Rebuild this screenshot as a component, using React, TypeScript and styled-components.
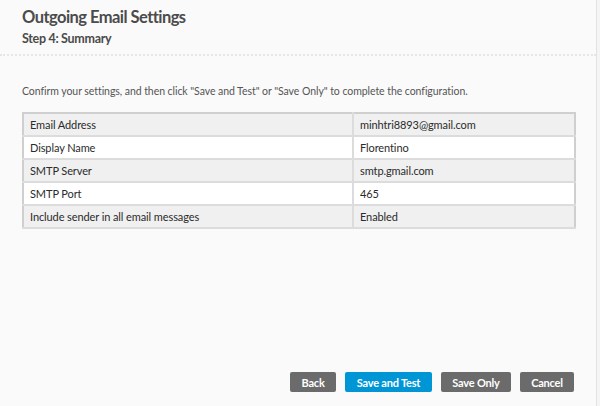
import React from "react";
import styled, { createGlobalStyle } from "styled-components";

const GlobalStyle = createGlobalStyle`
  html, body { margin: 0; padding: 0; background: #fafafa; }
  body { font-family: Lato, "Open Sans", sans-serif; }
  * { box-sizing: border-box; }
`;

const Frame = styled.div`
  width: 600px;
  height: 406px;
  display: flex;
  background: #fafafa;
  overflow: hidden;
`;

const Main = styled.div`
  flex: 1;
  display: flex;
  flex-direction: column;
  border-right: 1px solid #e2e2e2;
`;

const Edge = styled.div`
  width: 3px;
  background: #f4f4f4;
`;

const Header = styled.div`
  padding: 7px 0 0 22px;
  height: 56px;
  border-bottom: 2px dotted #e6e6e6;
`;

const Title = styled.h1`
  margin: 0;
  font-size: 16.5px;
  letter-spacing: -0.55px;
  line-height: 20px;
  font-weight: 700;
  color: #4b4b4b;
`;

const Subtitle = styled.h2`
  margin: 4px 0 0;
  font-size: 12.5px;
  letter-spacing: -0.3px;
  line-height: 16px;
  font-weight: 700;
  color: #4b4b4b;
`;

const Body = styled.div`
  flex: 1;
  padding: 28px 0 0 22px;
  display: flex;
  flex-direction: column;
`;

const Intro = styled.p`
  margin: 0;
  font-size: 10.5px;
  letter-spacing: -0.06px;
  line-height: 14px;
  color: #555;
`;

const Table = styled.table`
  margin-top: 14px;
  width: 554px;
  border-collapse: collapse;
  border: 2px solid #cfcfcf;
`;

const Row = styled.tr<{ $shaded: boolean }>`
  background: ${(p) => (p.$shaded ? "#f0f0f0" : "#ffffff")};
  border-bottom: 2px solid #dcdcdc;
`;

const Cell = styled.td<{ $w?: number }>`
  height: 23px;
  padding: 0 6px;
  font-size: 11px;
  letter-spacing: -0.1px;
  color: #2b2b2b;
  width: ${(p) => (p.$w ? `${p.$w}px` : "auto")};
  & + & { border-left: 2px solid #dcdcdc; }
`;

const Footer = styled.div`
  display: flex;
  justify-content: flex-end;
  gap: 9px;
  padding: 0 22px 14px 0;
`;

const Button = styled.button<{ $primary?: boolean; $w: number }>`
  width: ${(p) => p.$w}px;
  height: 20px;
  border: none;
  border-radius: 2px;
  background: ${(p) => (p.$primary ? "#0096d6" : "#6b6b6b")};
  color: #fff;
  font-family: Lato, "Open Sans", sans-serif;
  font-size: 11px;
  letter-spacing: -0.2px;
  font-weight: 700;
  padding: 0;
  cursor: pointer;
`;

const rows: [string, string][] = [
  ["Email Address", "minhtri8893@gmail.com"],
  ["Display Name", "Florentino"],
  ["SMTP Server", "smtp.gmail.com"],
  ["SMTP Port", "465"],
  ["Include sender in all email messages", "Enabled"],
];

export default function App() {
  return (
    <>
      <GlobalStyle />
      <Frame>
        <Main>
          <Header>
            <Title>Outgoing Email Settings</Title>
            <Subtitle>Step 4: Summary</Subtitle>
          </Header>
          <Body>
            <Intro>
              Confirm your settings, and then click "Save and Test" or "Save Only" to complete the configuration.
            </Intro>
            <Table>
              <tbody>
                {rows.map(([k, v], i) => (
                  <Row key={k} $shaded={i % 2 === 0}>
                    <Cell $w={330}>{k}</Cell>
                    <Cell>{v}</Cell>
                  </Row>
                ))}
              </tbody>
            </Table>
          </Body>
          <Footer>
            <Button $w={46}>Back</Button>
            <Button $primary $w={87}>Save and Test</Button>
            <Button $w={70}>Save Only</Button>
            <Button $w={54}>Cancel</Button>
          </Footer>
        </Main>
        <Edge />
      </Frame>
    </>
  );
}
